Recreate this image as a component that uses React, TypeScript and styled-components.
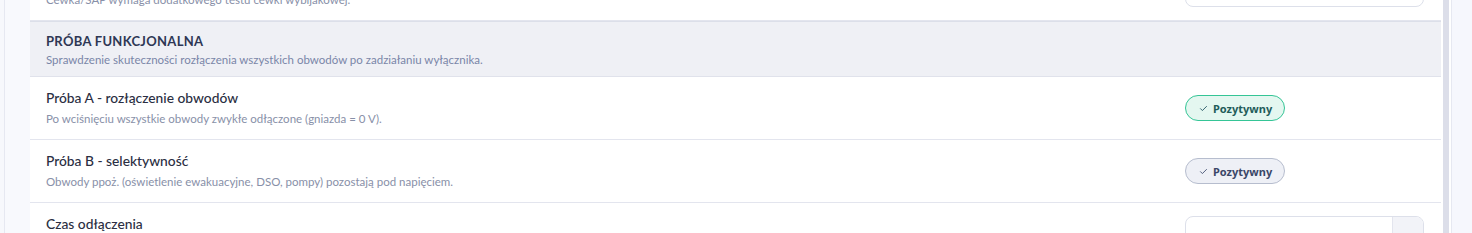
import React from 'react';
import styled, { createGlobalStyle } from 'styled-components';

const GlobalStyle = createGlobalStyle`
  html, body {
    margin: 0;
    padding: 0;
    background: #f6f7fb;
    font-family: Lato, "Noto Sans", sans-serif;
    overflow: hidden;
  }
`;

type Status = 'positive' | 'neutral';

interface TestRow {
  title: string;
  description?: string;
  status?: Status;
  input?: boolean;
  suffix?: string;
}

const rows: TestRow[] = [
  {
    title: 'Test cewki wybijakowej',
    description: 'Cewka/SAP wymaga dodatkowego testu cewki wybijakowej.',
    input: true,
  },
];

const functionalRows: TestRow[] = [
  {
    title: 'Próba A - rozłączenie obwodów',
    description: 'Po wciśnięciu wszystkie obwody zwykłe odłączone (gniazda = 0 V).',
    status: 'positive',
  },
  {
    title: 'Próba B - selektywność',
    description: 'Obwody ppoż. (oświetlenie ewakuacyjne, DSO, pompy) pozostają pod napięciem.',
    status: 'neutral',
  },
  {
    title: 'Czas odłączenia',
    description: 'Zmierzony czas od wciśnięcia przycisku do odłączenia obwodów.',
    input: true,
    suffix: 's',
  },
];

const Check = () => (
  <svg width="9" height="9" viewBox="0 0 24 24" fill="none" stroke="currentColor" strokeWidth="2.5" strokeLinecap="round" strokeLinejoin="round">
    <path d="M4 12.5l5 5L20 6.5" />
  </svg>
);

const App: React.FC = () => {
  const renderRow = (row: TestRow, i: number) => (
    <Row key={row.title + i}>
      <RowText>
        <RowTitle>{row.title}</RowTitle>
        {row.description && <RowDesc>{row.description}</RowDesc>}
      </RowText>
      <RowControl>
        {row.status && (
          <Badge $status={row.status}>
            <Check />
            Pozytywny
          </Badge>
        )}
        {row.input && (
          <InputBox>
            <InputField />
            {row.suffix && <Suffix>{row.suffix}</Suffix>}
          </InputBox>
        )}
      </RowControl>
    </Row>
  );

  return (
    <>
      <GlobalStyle />
      <Frame>
        <SideEdge />
        <Panel>
          <Card>
            {rows.map(renderRow)}
            <SectionHeader>
              <SectionTitle>Próba funkcjonalna</SectionTitle>
              <SectionSubtitle>
                Sprawdzenie skuteczności rozłączenia wszystkich obwodów po zadziałaniu wyłącznika.
              </SectionSubtitle>
            </SectionHeader>
            {functionalRows.map(renderRow)}
          </Card>
          <ScrollTrack>
            <ScrollThumb />
          </ScrollTrack>
        </Panel>
        <RightGutter />
      </Frame>
    </>
  );
};

const Frame = styled.div`
  display: flex;
  height: 233px;
  overflow: hidden;
`;

const SideEdge = styled.div`
  width: 4px;
  flex-shrink: 0;
  background: #f7f8fc;
  border-right: 1px solid #e6e8f1;
`;

const Panel = styled.div`
  flex: 1;
  display: flex;
  align-items: flex-start;
  padding-left: 25px;
  background: #f8f9fd;
  border-right: 1px solid #e6e8f1;
`;

const Card = styled.div`
  flex: 1;
  background: #ffffff;
  margin-top: -42px;
`;

const ScrollTrack = styled.div`
  width: 10px;
  align-self: stretch;
  background: #ffffff;
  display: flex;
  justify-content: center;
  padding: 0 2px 0 2px;
  box-sizing: border-box;
`;

const ScrollThumb = styled.div`
  width: 6px;
  height: 100%;
  background: #dcdee9;
`;

const RightGutter = styled.div`
  width: 20px;
  flex-shrink: 0;
  background: #f6f7fd;
`;

const Row = styled.div`
  display: flex;
  align-items: center;
  justify-content: space-between;
  padding: 12px 16px 12px;
  border-bottom: 1px solid #e3e5ee;
  min-height: 37px;
`;

const RowText = styled.div`
  display: flex;
  flex-direction: column;
  gap: 4px;
`;

const RowTitle = styled.div`
  font-size: 13.8px;
  line-height: 18px;
  color: #2a2e42;
  font-weight: 500;
`;

const RowDesc = styled.div`
  font-size: 11.5px;
  line-height: 16px;
  color: #8890a8;
`;

const RowControl = styled.div`
  width: 240px;
  display: flex;
  align-items: center;
`;

const Badge = styled.span<{ $status: Status }>`
  display: inline-flex;
  align-items: center;
  gap: 5px;
  height: 26px;
  box-sizing: border-box;
  padding: 0 12px 0 13px;
  border-radius: 13px;
  font-family: "Noto Sans", "Open Sans", sans-serif;
  font-size: 11px;
  font-weight: 700;
  border: 1px solid ${({ $status }) => ($status === 'positive' ? '#35c596' : '#b6bdce')};
  background: ${({ $status }) => ($status === 'positive' ? '#e4f7f0' : '#eef0f6')};
  color: ${({ $status }) => ($status === 'positive' ? '#1f5d5a' : '#3a4768')};

  svg {
    color: ${({ $status }) => ($status === 'positive' ? '#2a5a66' : '#4a5676')};
  }
`;

const InputBox = styled.div`
  display: flex;
  width: 239px;
  height: 36px;
  box-sizing: border-box;
  border: 1px solid #dde0ea;
  border-radius: 8px;
  overflow: hidden;
  background: #ffffff;
`;

const InputField = styled.div`
  flex: 1;
`;

const Suffix = styled.div`
  width: 30px;
  display: flex;
  align-items: center;
  justify-content: center;
  background: #f2f3f8;
  border-left: 1px solid #e3e5ee;
  font-size: 12px;
  font-weight: 700;
  color: #3c4a78;
`;

const SectionHeader = styled.div`
  background: #eff0f5;
  border-top: 1px solid #dcdfe9;
  border-bottom: 1px solid #e0e2eb;
  padding: 10px 16px 9px;
  display: flex;
  flex-direction: column;
  gap: 2px;
`;

const SectionTitle = styled.div`
  font-size: 13px;
  line-height: 18px;
  font-weight: 700;
  text-transform: uppercase;
  letter-spacing: 0.3px;
  color: #2e3754;
`;

const SectionSubtitle = styled.div`
  font-size: 11.5px;
  line-height: 15px;
  color: #7a86a8;
`;

export default App;
